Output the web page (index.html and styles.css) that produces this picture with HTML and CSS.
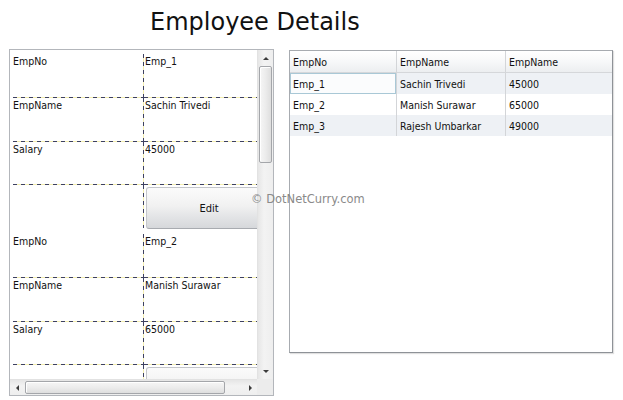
FILE: index.html
```html
<!DOCTYPE html>
<html>
<head>
<meta charset="utf-8">
<link rel="stylesheet" href="styles.css">
</head>
<body>
<div class="page">
  <header class="header"><h1 class="title">Employee Details</h1></header>
  <div class="main">
    <div class="listbox">
      <div class="lb-body">
        <div class="viewport">
          <div class="item">
            <div class="egrid">
              <div class="cell lab hl">EmpNo</div><div class="cell val hl">Emp_1</div>
              <div class="cell lab hl">EmpName</div><div class="cell val hl">Sachin Trivedi</div>
              <div class="cell lab hl">Salary</div><div class="cell val hl">45000</div>
              <div class="cell lab"></div><div class="cell val"><div class="btn">Edit</div></div>
            </div>
          </div>
          <div class="item">
            <div class="egrid">
              <div class="cell lab hl">EmpNo</div><div class="cell val hl">Emp_2</div>
              <div class="cell lab hl">EmpName</div><div class="cell val hl">Manish Surawar</div>
              <div class="cell lab hl">Salary</div><div class="cell val hl">65000</div>
              <div class="cell lab"></div><div class="cell val"><div class="btn"></div></div>
            </div>
          </div>
        </div>
        <div class="vscroll">
          <div class="sbtn"><span class="tri up"></span></div>
          <div class="vtrack"><div class="vthumb"></div></div>
          <div class="sbtn"><span class="tri down"></span></div>
        </div>
      </div>
      <div class="lb-foot">
        <div class="hscroll">
          <div class="hbtn"><span class="tri left"></span></div>
          <div class="htrack"><div class="hthumb"></div></div>
          <div class="hbtn"><span class="tri right"></span></div>
        </div>
        <div class="corner"></div>
      </div>
    </div>

    <div class="datagrid">
      <div class="dg-row dg-head">
        <div class="dg-cell">EmpNo</div><div class="dg-cell">EmpName</div><div class="dg-cell last">EmpName</div>
      </div>
      <div class="dg-row alt">
        <div class="dg-cell focus">Emp_1</div><div class="dg-cell">Sachin Trivedi</div><div class="dg-cell last">45000</div>
      </div>
      <div class="dg-row">
        <div class="dg-cell">Emp_2</div><div class="dg-cell">Manish Surawar</div><div class="dg-cell last">65000</div>
      </div>
      <div class="dg-row alt">
        <div class="dg-cell">Emp_3</div><div class="dg-cell">Rajesh Umbarkar</div><div class="dg-cell last">49000</div>
      </div>
    </div>
  </div>
  <div class="watermark">© DotNetCurry.com</div>
</div>
</body>
</html>
```
FILE: styles.css
```css
html, body {
  margin: 0;
  padding: 0;
  background: #ffffff;
}
.page {
  position: relative;
  width: 623px;
  height: 400px;
  overflow: hidden;
  font-family: "DejaVu Sans Condensed", "DejaVu Sans", sans-serif;
  font-size: 10.5px;
  color: #111;
}
.header {
  height: 49px;
  box-sizing: border-box;
  padding: 7px 0 0 150px;
}
.title {
  margin: 0;
  font-family: "DejaVu Sans", sans-serif;
  font-weight: normal;
  font-size: 24px;
  line-height: 30px;
  color: #111;
}
.main {
  display: flex;
  align-items: flex-start;
  gap: 15px;
  padding-left: 9px;
}

/* ---------- left list box ---------- */
.listbox {
  width: 265px;
  height: 347px;
  box-sizing: border-box;
  border: 1px solid #b3b6bb;
  display: flex;
  flex-direction: column;
}
.lb-body {
  display: flex;
  height: 329px;
}
.viewport {
  width: 247px;
  overflow: hidden;
  padding-top: 1px;
  box-sizing: border-box;
}
.item {
  padding: 3px 0 3px 3px;
}
.egrid {
  display: grid;
  grid-template-columns: 131px 128px;
  grid-template-rows: 44px 44px 43px 43px;
  width: 259px;
}
.cell {
  line-height: 13px;
  padding-top: 1px;
  box-sizing: border-box;
  white-space: nowrap;
}
.cell.lab {
  background:
    repeating-linear-gradient(to bottom, #3d4060 0 4px, #f3eeb0 4px 8px) right top / 1px 100% no-repeat;
}
.cell.lab.hl {
  background:
    repeating-linear-gradient(to bottom, #3d4060 0 4px, #f3eeb0 4px 8px) right top / 1px 100% no-repeat,
    repeating-linear-gradient(to right, #3d4060 0 4px, #f3eeb0 4px 8px) left bottom / 100% 1px no-repeat;
}
.cell.val.hl {
  background:
    repeating-linear-gradient(to right, #3d4060 0 4px, #f3eeb0 4px 8px) left bottom / 100% 1px no-repeat;
}
.cell.val {
  padding-left: 1px;
}
.btn {
  margin: 1px 0 0 1px;
  height: 42px;
  box-sizing: border-box;
  border: 1px solid #c4c6ca;
  border-bottom-color: #a8abb0;
  border-radius: 3px;
  background: linear-gradient(#fbfbfb, #f1f1f1 45%, #e4e5e7 70%, #d6d8db);
  display: flex;
  align-items: center;
  justify-content: center;
  font-size: 11px;
  color: #111;
}

/* scrollbars */
.vscroll {
  width: 16px;
  display: flex;
  flex-direction: column;
  background: linear-gradient(to right, #e6e6e6, #f3f3f3 40%, #eeeeee);
  border-left: 1px solid #e2e2e2;
  box-sizing: border-box;
}
.sbtn {
  height: 16px;
  display: flex;
  align-items: center;
  justify-content: center;
}
.vtrack {
  flex: 1;
  padding: 0 0 0 1px;
}
.vthumb {
  width: 13px;
  height: 97px;
  box-sizing: border-box;
  border: 1px solid #a4a6aa;
  border-radius: 2px;
  background: linear-gradient(to right, #f6f6f6, #ececec 50%, #dedede);
  box-shadow: inset 1px 1px 0 #ffffff;
}
.lb-foot {
  display: flex;
  height: 16px;
}
.hscroll {
  width: 247px;
  display: flex;
  background: linear-gradient(#e6e6e6, #f3f3f3 40%, #eeeeee);
  border-top: 1px solid #e2e2e2;
  box-sizing: border-box;
}
.hbtn {
  width: 14px;
  display: flex;
  align-items: center;
  justify-content: center;
}
.htrack {
  flex: 1;
  padding: 1px 0 0 1px;
}
.hthumb {
  width: 200px;
  height: 13px;
  box-sizing: border-box;
  border: 1px solid #a4a6aa;
  border-radius: 2px;
  background: linear-gradient(#f6f6f6, #ececec 50%, #dedede);
  box-shadow: inset 1px 1px 0 #ffffff;
}
.corner {
  width: 16px;
  background: #ececec;
}
.tri {
  width: 0;
  height: 0;
  display: block;
}
.tri.up {
  border-left: 3px solid transparent;
  border-right: 3px solid transparent;
  border-bottom: 3px solid #3c3c3c;
}
.tri.down {
  border-left: 3px solid transparent;
  border-right: 3px solid transparent;
  border-top: 3px solid #3c3c3c;
}
.tri.left {
  border-top: 3px solid transparent;
  border-bottom: 3px solid transparent;
  border-right: 3px solid #3c3c3c;
}
.tri.right {
  border-top: 3px solid transparent;
  border-bottom: 3px solid transparent;
  border-left: 3px solid #3c3c3c;
}

/* ---------- right data grid ---------- */
.datagrid {
  margin-top: 1px;
  width: 324px;
  height: 303px;
  box-sizing: border-box;
  border: 1px solid #a7abb0;
  border-right-color: #8e9297;
  border-bottom-color: #8e9297;
  box-shadow: 1px 1px 1px rgba(0, 0, 0, 0.12);
  background: #ffffff;
}
.dg-row {
  display: grid;
  grid-template-columns: 107px 109px 1fr;
  height: 21px;
}
.dg-head {
  background: linear-gradient(#ffffff, #f7f8f9 50%, #eceef0);
  border-bottom: 1px solid #d5d7da;
}
.dg-row.alt {
  background: #eef1f5;
}
.dg-cell {
  display: flex;
  align-items: center;
  padding-left: 3px;
  border-right: 1px solid #d3d5d8;
  white-space: nowrap;
  box-sizing: border-box;
}
.dg-cell.last {
  border-right: none;
}
.dg-cell.focus {
  background: #fbfcfd;
  box-shadow: inset 0 0 0 1px #a9c8d6;
}

.watermark {
  position: absolute;
  left: 251px;
  top: 192px;
  font-family: "DejaVu Sans", sans-serif;
  font-size: 11.5px;
  color: #8a8a8a;
  line-height: 14px;
}
```
